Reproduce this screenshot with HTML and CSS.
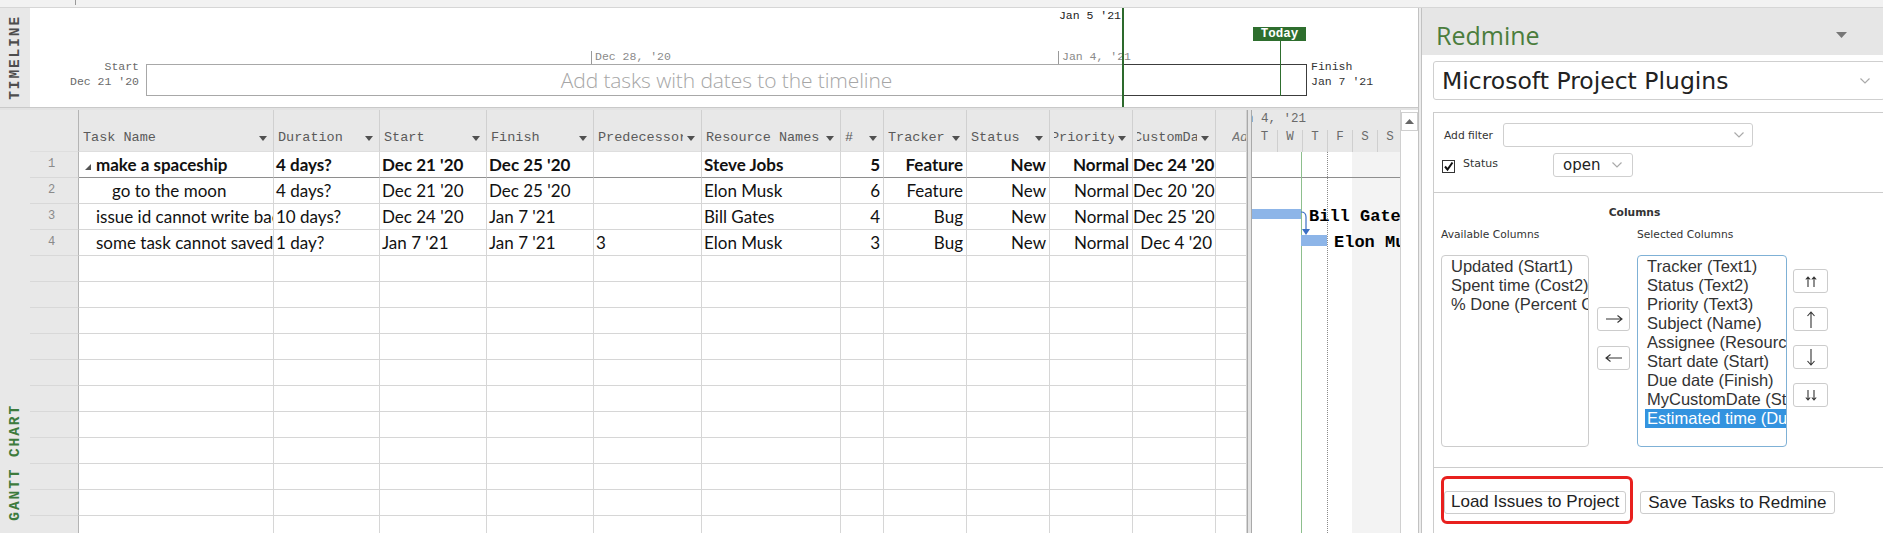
FILE: index.html
```html
<!DOCTYPE html>
<html>
<head>
<meta charset="utf-8">
<title>Project - Redmine</title>
<link rel="stylesheet" href="styles.css">
</head>
<body>
<div class="topstrip"><span class="tick"></span></div>
<div class="app">
  <div class="main">
    <div class="timeline">
      <div class="vlabel tl-label"><span>TIMELINE</span></div>
      <div class="tl-canvas">
        <div class="tl-start"><div>Start</div><div>Dec 21 '20</div></div>
        <div class="tl-box"><span class="tl-hint">Add tasks with dates to the timeline</span></div>
        <div class="tl-box-cur"></div>
        <div class="tl-mark m1">Dec 28, '20</div>
        <div class="tl-mark m2">Jan 4, '21</div>
        <div class="tl-cur-date">Jan 5 '21</div>
        <div class="tl-cur-line"></div>
        <div class="tl-today">Today</div>
        <div class="tl-today-line"></div>
        <div class="tl-finish"><div>Finish</div><div>Jan 7 '21</div></div>
      </div>
    </div>
    <div class="hsplit"></div>
    <div class="gantt">
      <div class="vlabel gc-label"><span>GANTT CHART</span></div>
      <div class="sheet">
        <div class="row head">
          <span class="rn"></span>
          <span class="h"><span class="hl">Task Name</span><i class="dd"></i></span>
          <span class="h"><span class="hl">Duration</span><i class="dd"></i></span>
          <span class="h"><span class="hl">Start</span><i class="dd"></i></span>
          <span class="h"><span class="hl">Finish</span><i class="dd"></i></span>
          <span class="h"><span class="hl">Predecessors</span><i class="dd"></i></span>
          <span class="h"><span class="hl">Resource Names</span><i class="dd"></i></span>
          <span class="h"><span class="hl">#</span><i class="dd"></i></span>
          <span class="h"><span class="hl">Tracker</span><i class="dd"></i></span>
          <span class="h"><span class="hl">Status</span><i class="dd"></i></span>
          <span class="h"><span class="hl shift"><span>Priority</span></span><i class="dd"></i></span>
          <span class="h"><span class="hl shift"><span>CustomDate</span></span><i class="dd"></i></span>
          <span class="h add"><span class="hl">Add New Column</span></span>
        </div>
        <div class="row r1 bold">
          <span class="rn">1</span>
          <span class="c tn"><svg class="tri" width="6" height="6" viewBox="0 0 6 6"><path d="M6 0V6H0z" fill="#555"/></svg>make a spaceship</span>
          <span class="c">4 days?</span>
          <span class="c">Dec 21 '20</span>
          <span class="c">Dec 25 '20</span>
          <span class="c"></span>
          <span class="c">Steve Jobs</span>
          <span class="c r">5</span>
          <span class="c r">Feature</span>
          <span class="c r">New</span>
          <span class="c r">Normal</span>
          <span class="c r">Dec 24 '20</span>
          <span class="c"></span>
        </div>
        <div class="row">
          <span class="rn">2</span>
          <span class="c tn sub">go to the moon</span>
          <span class="c">4 days?</span>
          <span class="c">Dec 21 '20</span>
          <span class="c">Dec 25 '20</span>
          <span class="c"></span>
          <span class="c">Elon Musk</span>
          <span class="c r">6</span>
          <span class="c r">Feature</span>
          <span class="c r">New</span>
          <span class="c r">Normal</span>
          <span class="c r">Dec 20 '20</span>
          <span class="c"></span>
        </div>
        <div class="row">
          <span class="rn">3</span>
          <span class="c tn">issue id cannot write back</span>
          <span class="c">10 days?</span>
          <span class="c">Dec 24 '20</span>
          <span class="c">Jan 7 '21</span>
          <span class="c"></span>
          <span class="c">Bill Gates</span>
          <span class="c r">4</span>
          <span class="c r">Bug</span>
          <span class="c r">New</span>
          <span class="c r">Normal</span>
          <span class="c r">Dec 25 '20</span>
          <span class="c"></span>
        </div>
        <div class="row">
          <span class="rn">4</span>
          <span class="c tn">some task cannot saved</span>
          <span class="c">1 day?</span>
          <span class="c">Jan 7 '21</span>
          <span class="c">Jan 7 '21</span>
          <span class="c">3</span>
          <span class="c">Elon Musk</span>
          <span class="c r">3</span>
          <span class="c r">Bug</span>
          <span class="c r">New</span>
          <span class="c r">Normal</span>
          <span class="c r">Dec 4 '20</span>
          <span class="c"></span>
        </div>
        <div class="row"><span class="rn"></span><span class="c"></span><span class="c"></span><span class="c"></span><span class="c"></span><span class="c"></span><span class="c"></span><span class="c"></span><span class="c"></span><span class="c"></span><span class="c"></span><span class="c"></span><span class="c"></span></div>
        <div class="row"><span class="rn"></span><span class="c"></span><span class="c"></span><span class="c"></span><span class="c"></span><span class="c"></span><span class="c"></span><span class="c"></span><span class="c"></span><span class="c"></span><span class="c"></span><span class="c"></span><span class="c"></span></div>
        <div class="row"><span class="rn"></span><span class="c"></span><span class="c"></span><span class="c"></span><span class="c"></span><span class="c"></span><span class="c"></span><span class="c"></span><span class="c"></span><span class="c"></span><span class="c"></span><span class="c"></span><span class="c"></span></div>
        <div class="row"><span class="rn"></span><span class="c"></span><span class="c"></span><span class="c"></span><span class="c"></span><span class="c"></span><span class="c"></span><span class="c"></span><span class="c"></span><span class="c"></span><span class="c"></span><span class="c"></span><span class="c"></span></div>
        <div class="row"><span class="rn"></span><span class="c"></span><span class="c"></span><span class="c"></span><span class="c"></span><span class="c"></span><span class="c"></span><span class="c"></span><span class="c"></span><span class="c"></span><span class="c"></span><span class="c"></span><span class="c"></span></div>
        <div class="row"><span class="rn"></span><span class="c"></span><span class="c"></span><span class="c"></span><span class="c"></span><span class="c"></span><span class="c"></span><span class="c"></span><span class="c"></span><span class="c"></span><span class="c"></span><span class="c"></span><span class="c"></span></div>
        <div class="row"><span class="rn"></span><span class="c"></span><span class="c"></span><span class="c"></span><span class="c"></span><span class="c"></span><span class="c"></span><span class="c"></span><span class="c"></span><span class="c"></span><span class="c"></span><span class="c"></span><span class="c"></span></div>
        <div class="row"><span class="rn"></span><span class="c"></span><span class="c"></span><span class="c"></span><span class="c"></span><span class="c"></span><span class="c"></span><span class="c"></span><span class="c"></span><span class="c"></span><span class="c"></span><span class="c"></span><span class="c"></span></div>
        <div class="row"><span class="rn"></span><span class="c"></span><span class="c"></span><span class="c"></span><span class="c"></span><span class="c"></span><span class="c"></span><span class="c"></span><span class="c"></span><span class="c"></span><span class="c"></span><span class="c"></span><span class="c"></span></div>
        <div class="row"><span class="rn"></span><span class="c"></span><span class="c"></span><span class="c"></span><span class="c"></span><span class="c"></span><span class="c"></span><span class="c"></span><span class="c"></span><span class="c"></span><span class="c"></span><span class="c"></span><span class="c"></span></div>
        <div class="row"><span class="rn"></span><span class="c"></span><span class="c"></span><span class="c"></span><span class="c"></span><span class="c"></span><span class="c"></span><span class="c"></span><span class="c"></span><span class="c"></span><span class="c"></span><span class="c"></span><span class="c"></span></div>
        <div class="row"><span class="rn"></span><span class="c"></span><span class="c"></span><span class="c"></span><span class="c"></span><span class="c"></span><span class="c"></span><span class="c"></span><span class="c"></span><span class="c"></span><span class="c"></span><span class="c"></span><span class="c"></span></div>
      </div>
      <div class="vsplit"></div>
      <div class="chart">
        <div class="ch-head">
          <div class="ch-week"><span>Jan 4, '21</span></div>
          <div class="ch-days"><span>T</span><span>W</span><span>T</span><span>F</span><span>S</span><span>S</span></div>
        </div>
        <div class="ch-body">
          <div class="weekend"></div>
          <div class="sum-line"></div>
          <div class="today-line"></div>
          <div class="dot-line"></div>
          <div class="bar b3"></div>
          <div class="blabel l3">Bill Gates</div>
          <svg class="link" width="14" height="28" viewBox="0 0 14 28"><path d="M2 3 Q7 3 7 8 V21" fill="none" stroke="#3b6fc4" stroke-width="1.2"/><path d="M3 20 H11 L7 26z" fill="#3b6fc4"/></svg>
          <div class="bar b4"></div>
          <div class="blabel l4">Elon Musk</div>
        </div>
      </div>
      <div class="vscroll"><div class="sb-up"><svg width="9" height="5" viewBox="0 0 9 5"><path d="M0 5L4.5 0L9 5z" fill="#666"/></svg></div></div>
    </div>
  </div>
  <div class="pane-edge"></div>
  <div class="pane">
    <div class="pane-head">
      <span class="pane-title">Redmine</span>
      <svg class="pane-menu" width="11" height="6" viewBox="0 0 11 6"><path d="M0 0H11L5.5 6z" fill="#777"/></svg>
    </div>
    <div class="pane-body">
      <div class="proj-select">
        <span>Microsoft Project Plugins</span>
        <svg class="chev" width="10" height="6" viewBox="0 0 10 6"><path d="M0.5 0.5L5 5L9.5 0.5" fill="none" stroke="#aaa" stroke-width="1.2"/></svg>
      </div>
      <div class="form">
        <div class="sec filters">
          <div class="frow">
            <span class="flabel">Add filter</span>
            <div class="sel sel-filter"><svg class="chev" width="10" height="6" viewBox="0 0 10 6"><path d="M0.5 0.5L5 5L9.5 0.5" fill="none" stroke="#aaa" stroke-width="1.2"/></svg></div>
          </div>
          <div class="frow">
            <span class="cbox"><svg width="11" height="11" viewBox="0 0 11 11"><path d="M2 5.5L4.5 8.5L9.5 1.5" fill="none" stroke="#111" stroke-width="2"/></svg></span>
            <span class="flabel2">Status</span>
            <div class="sel sel-open"><span>open</span><svg class="chev" width="10" height="6" viewBox="0 0 10 6"><path d="M0.5 0.5L5 5L9.5 0.5" fill="none" stroke="#aaa" stroke-width="1.2"/></svg></div>
          </div>
        </div>
        <div class="sec columns">
          <div class="cols">
            <div class="cols-title">Columns</div>
            <div class="cols-grid cols-labels">
              <span>Available Columns</span>
              <span class="lab2">Selected Columns</span>
            </div>
            <div class="cols-grid">
              <div class="list">
                <div class="opt">Updated (Start1)</div>
                <div class="opt">Spent time (Cost2)</div>
                <div class="opt">% Done (Percent Complete)</div>
              </div>
              <div class="mid-btns">
                <span class="btn sq" title="Add"><svg width="18" height="10" viewBox="0 0 18 10"><path d="M1 5H17M12.5 1.5L17 5L12.5 8.5" fill="none" stroke="#333" stroke-width="1.1"/></svg></span>
                <span class="btn sq" title="Remove"><svg width="18" height="10" viewBox="0 0 18 10"><path d="M17 5H1M5.5 1.5L1 5L5.5 8.5" fill="none" stroke="#333" stroke-width="1.1"/></svg></span>
              </div>
              <div class="list focus">
                <div class="opt">Tracker (Text1)</div>
                <div class="opt">Status (Text2)</div>
                <div class="opt">Priority (Text3)</div>
                <div class="opt">Subject (Name)</div>
                <div class="opt">Assignee (Resource Names)</div>
                <div class="opt">Start date (Start)</div>
                <div class="opt">Due date (Finish)</div>
                <div class="opt">MyCustomDate (Start2)</div>
                <div class="opt selected">Estimated time (Duration)</div>
              </div>
              <div class="ord-btns">
                <span class="btn sq" title="Top"><svg width="12" height="11" viewBox="0 0 12 11"><path d="M3 11V1M0.8 3.5L3 1L5.2 3.5M9 11V1M6.8 3.5L9 1L11.2 3.5" fill="none" stroke="#333" stroke-width="1.1"/></svg></span>
                <span class="btn sq" title="Up"><svg width="10" height="17" viewBox="0 0 10 17"><path d="M5 17V1M1.5 5L5 1L8.5 5" fill="none" stroke="#333" stroke-width="1.1"/></svg></span>
                <span class="btn sq" title="Down"><svg width="10" height="17" viewBox="0 0 10 17"><path d="M5 0V16M1.5 12L5 16L8.5 12" fill="none" stroke="#333" stroke-width="1.1"/></svg></span>
                <span class="btn sq" title="Bottom"><svg width="12" height="11" viewBox="0 0 12 11"><path d="M3 0V10M0.8 7.5L3 10L5.2 7.5M9 0V10M6.8 7.5L9 10L11.2 7.5" fill="none" stroke="#333" stroke-width="1.1"/></svg></span>
              </div>
            </div>
          </div>
        </div>
        <div class="sec actions">
          <span class="mark"><span class="btn wide">Load Issues to Project</span></span>
          <span class="btn wide">Save Tasks to Redmine</span>
        </div>
      </div>
    </div>
  </div>
</div>
</body>
</html>
```

FILE: styles.css
```css
* { box-sizing: border-box; margin: 0; padding: 0; }
html, body { width: 1883px; height: 533px; overflow: hidden; background: #fff; }
body { font-family: "Liberation Sans", Arial, sans-serif; color: #222; }

.topstrip { height: 8px; background: #f2f2f2; border-bottom: 1px solid #d6d6d6; position: relative; }
.topstrip .tick { position: absolute; left: 75px; top: 0; width: 1px; height: 5px; background: #9a9a9a; }

.app { display: flex; height: 525px; }
.main { width: 1418px; display: flex; flex-direction: column; flex-shrink: 0; }

/* vertical side labels */
.vlabel { width: 30px; flex-shrink: 0; background: #e8e8e8; display: flex; flex-direction: column; align-items: center; justify-content: center; font-family: "Liberation Mono", monospace; font-weight: bold; font-size: 14.5px; letter-spacing: 1.9px; color: #4d4d4d; }
.vlabel span { writing-mode: vertical-rl; transform: rotate(180deg); }
.gc-label { justify-content: flex-end; padding-bottom: 12px; color: #3d7b3d; }

/* timeline */
.timeline { height: 99px; display: flex; }
.tl-canvas { flex: 1; position: relative; background: #fff; overflow: hidden; font-family: "Liberation Mono", monospace; font-size: 11.5px; }
.tl-start { position: absolute; left: 0; width: 109px; top: 51px; line-height: 15px; text-align: right; color: #6a6a6a; }
.tl-finish { position: absolute; left: 1281px; top: 51px; line-height: 15px; color: #333; }
.tl-box { position: absolute; left: 116px; top: 56px; width: 1161px; height: 32px; border: 1px solid #a8a8a8; display: flex; align-items: center; justify-content: center; }
.tl-hint { font-family: "Open Sans", sans-serif; font-weight: 300; font-size: 21px; color: #a6a6a6; letter-spacing: -0.1px; }
.tl-box-cur { position: absolute; left: 1092px; top: 56px; width: 185px; height: 32px; border: 1px solid #3c3c3c; border-left: none; }
.tl-mark { position: absolute; top: 43px; height: 13px; line-height: 12px; padding-left: 3px; border-left: 1px solid #9a9a9a; color: #8a8a8a; }
.m1 { left: 561px; }
.m2 { left: 1028px; }
.tl-cur-date { position: absolute; right: 297px; top: 1px; line-height: 14px; color: #222; }
.tl-cur-line { position: absolute; left: 1092px; top: 0; width: 2px; height: 99px; background: #2d6a2d; }
.tl-today { position: absolute; left: 1223px; top: 19px; width: 53px; height: 14px; line-height: 14px; background: #2e6e2e; color: #fff; font-weight: bold; font-size: 12.5px; text-align: center; }
.tl-today-line { position: absolute; left: 1250px; top: 33px; width: 1px; height: 55px; background: #2e6e2e; }

.hsplit { height: 3px; background: #e2e2e2; border-top: 1px solid #c9c9c9; }

/* gantt */
.gantt { flex: 1; display: flex; overflow: hidden; }
.sheet { width: 1217px; flex-shrink: 0; overflow: hidden; }
.row { display: grid; grid-template-columns: 49px 195px 106px 107px 107px 108px 139px 43px 83px 83px 83px 83px 31px; height: 26px; }
.row > span { border-right: 1px solid #d6d6d6; border-bottom: 1px solid #d6d6d6; overflow: hidden; white-space: nowrap; }
.row .rn { background: #e8e8e8; border-right: 1px solid #b4b4b4; border-bottom: 1px solid #d8d8d8; font-family: "Liberation Mono", monospace; font-size: 12px; color: #8a8a8a; text-align: center; padding-right: 5px; line-height: 25px; }
.row.head { height: 42px; }
.row.head > span { background: #e8e8e8; border-bottom: 1px solid #dedede; border-right: 1px solid #d0d0d0; }
.row.head .rn { border-right: 1px solid #b4b4b4; }
.h { display: flex; align-items: flex-end; padding: 0 6px 6px 4px; font-family: "Liberation Mono", monospace; font-size: 13.5px; color: #5a5a5a; line-height: 14px; }
.hl { flex: 1; min-width: 0; overflow: hidden; white-space: nowrap; }
.hl.shift { display: flex; }
.hl.shift span { flex-shrink: 0; margin-left: -3px; }
.h .dd { flex-shrink: 0; width: 0; height: 0; margin-left: 4px; margin-bottom: 4px; border-left: 4px solid transparent; border-right: 4px solid transparent; border-top: 5px solid #505050; }
.h.add { padding-left: 16px; padding-right: 0; font-style: italic; color: #777; }

.c { font-family: "Lato", "Open Sans", sans-serif; font-size: 17px; line-height: 25px; padding-left: 2px; color: #111; }
.c.r { text-align: right; padding-left: 0; padding-right: 3px; }
.c.tn { padding-left: 17px; }
.c.tn.sub { padding-left: 33px; }
.bold .c { font-weight: bold; }
.r1 .c { border-bottom-color: #8e8e8e; }
.tri { margin-left: -11px; margin-right: 5px; vertical-align: 1px; }

.vsplit { width: 5px; flex-shrink: 0; background: #e4e4e4; border-left: 1px solid #a9a9a9; border-right: 1px solid #a9a9a9; }

.chart { width: 148px; flex-shrink: 0; display: flex; flex-direction: column; overflow: hidden; }
.ch-head { height: 42px; background: #e8e8e8; font-family: "Liberation Mono", monospace; font-size: 12.5px; color: #6a6a6a; }
.ch-week { height: 19px; line-height: 19px; overflow: hidden; white-space: nowrap; }
.ch-week span { display: inline-block; margin-left: -21px; }
.ch-days { display: flex; height: 22px; margin-top: 1px; }
.ch-days span { width: 25px; flex-shrink: 0; text-align: center; line-height: 15px; border-left: 1px solid #cfcfcf; }
.ch-days span:first-child { border-left: none; }
.ch-body { flex: 1; position: relative; }
.weekend { position: absolute; left: 100px; top: 0; width: 48px; bottom: 0; background: #f3f3f3; }
.sum-line { position: absolute; left: 0; right: 0; top: 25px; height: 1px; background: #8e8e8e; }
.today-line { position: absolute; left: 49px; top: 0; bottom: 0; width: 1px; background: #8dbf8d; }
.dot-line { position: absolute; left: 75px; top: 0; bottom: 0; border-left: 1px dotted #8a8a8a; }
.bar { position: absolute; background: #8db5e8; }
.b3 { left: 0; top: 57px; width: 49px; height: 10px; }
.b4 { left: 49px; top: 83px; width: 26px; height: 11px; }
.blabel { position: absolute; font-family: "Liberation Mono", monospace; font-weight: bold; font-size: 17px; line-height: 18px; color: #000; white-space: nowrap; }
.l3 { left: 57px; top: 56px; }
.l4 { left: 82px; top: 82px; }
.link { position: absolute; left: 47px; top: 57px; }

.vscroll { width: 18px; flex-shrink: 0; background: #fff; border-left: 1px solid #d0d0d0; padding: 2px 0 0 0; }
.sb-up { height: 19px; border: 1px solid #cfcfcf; display: flex; align-items: center; justify-content: center; background: #fff; }

/* task pane */
.pane-edge { width: 4px; flex-shrink: 0; background: #ececec; border-left: 1px solid #c2c2c2; border-right: 1px solid #c2c2c2; }
.pane { flex: 1; min-width: 0; display: flex; flex-direction: column; overflow: hidden; }
.pane-head { height: 47px; flex-shrink: 0; background: #e6e6e6; display: flex; align-items: flex-start; padding: 11px 0 0 14px; }
.pane-title { font-family: "Open Sans", sans-serif; font-size: 25px; line-height: 32px; color: #4b7d3d; }
.pane-menu { margin-left: auto; margin-right: 36px; margin-top: 13px; }
.pane-body { flex: 1; background: #fff; padding: 6px 0 0 11px; overflow: hidden; }
.proj-select { width: 452px; height: 39px; border: 1px solid #cfcfcf; border-radius: 3px; display: flex; align-items: center; padding: 0 14px 0 8px; font-family: "DejaVu Sans", Verdana, sans-serif; font-size: 23.5px; color: #222; }
.chev { margin-left: auto; flex-shrink: 0; }

.form { margin-top: 12px; width: 470px; border-left: 1px solid #cccccc; border-top: 1px solid #cccccc; font-family: "DejaVu Sans", Verdana, sans-serif; font-size: 10.7px; color: #333; }
.sec { border-bottom: 1px solid #cccccc; }
.filters { height: 80px; padding: 10px 0 0 8px; display: flex; flex-direction: column; gap: 6px; }
.frow { display: flex; align-items: center; height: 24px; }
.flabel { width: 61px; padding-left: 2px; }
.sel { height: 24px; border: 1px solid #cfcfcf; border-radius: 3px; display: flex; align-items: center; background: #fff; }
.sel-filter { width: 250px; padding-right: 8px; }
.sel-open { width: 80px; padding: 0 10px 0 9px; font-size: 15px; color: #222; }
.cbox { width: 13px; height: 13px; border: 1px solid #333; display: flex; align-items: center; justify-content: center; margin-top: 2px; }
.flabel2 { width: 98px; padding-left: 8px; font-size: 11px; margin-top: -3px; }

.columns { height: 275px; padding: 12px 0 0 7px; }
.cols { width: 387px; }
.cols-title { text-align: center; font-weight: bold; line-height: 15px; }
.cols-grid { display: grid; grid-template-columns: 148px 8px 33px 7px 150px 6px 35px; }
.cols-labels { margin-top: 7px; line-height: 15px; height: 28px; }
.cols-labels .lab2 { grid-column: 5 / 8; }
.list { grid-column: 1; height: 192px; border: 1px solid #cccccc; border-radius: 4px; padding: 1px 0 0 7px; overflow: hidden; font-family: "Liberation Sans", Arial, sans-serif; font-size: 16.5px; color: #333; }
.list.focus { grid-column: 5; border-color: #7fb1d6; }
.opt { height: 19px; line-height: 19px; padding-left: 2px; white-space: nowrap; }
.opt.selected { background: #3393df; color: #fff; }
.mid-btns { grid-column: 3; display: flex; flex-direction: column; gap: 15px; padding-top: 52px; }
.ord-btns { grid-column: 7; display: flex; flex-direction: column; gap: 14px; padding-top: 14px; }
.btn { display: inline-flex; align-items: center; justify-content: center; background: #fff; border: 1px solid #cccccc; border-radius: 3px; font-family: "Liberation Sans", Arial, sans-serif; font-size: 17px; color: #222; white-space: nowrap; }
.btn.sq { height: 24px; }

.actions { height: 70px; padding: 8px 0 0 7px; display: flex; align-items: flex-start; }
.mark { display: inline-block; border: 3.5px solid #e8201e; border-radius: 6px; padding: 11.5px 4px 7.5px 0; }
.btn.wide { height: 23px; padding: 0 6px; }
.actions > .btn.wide { margin-left: 7px; margin-top: 15px; padding: 0 7px; }
```
